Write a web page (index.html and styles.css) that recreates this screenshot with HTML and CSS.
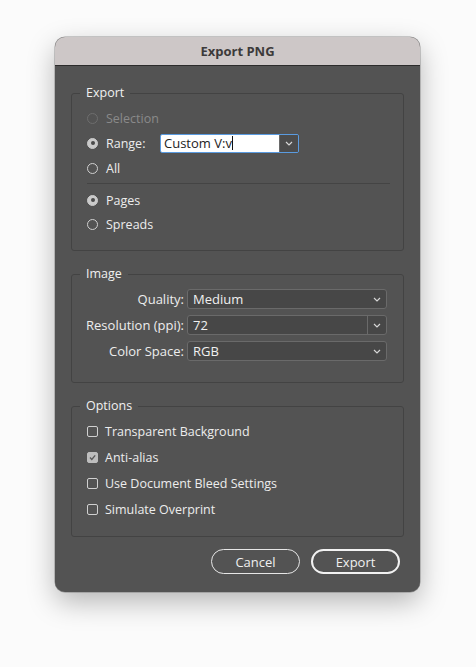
FILE: index.html
```html
<!DOCTYPE html>
<html>
<head>
<meta charset="utf-8">
<link rel="stylesheet" href="styles.css">
</head>
<body>
<div class="dialog">
  <div class="titlebar">Export PNG</div>
  <div class="content">
    <fieldset class="group group-export">
      <legend>Export</legend>
      <div class="inner">
        <div class="row disabled"><span class="radio"></span><span class="lbl">Selection</span></div>
        <div class="row row-range"><span class="radio checked"></span><span class="lbl range-label">Range:</span>
          <div class="combo">
            <span class="combo-text">Custom V:v<span class="caret"></span></span>
            <span class="combo-btn"><svg width="8" height="5" viewBox="0 0 8 5"><path d="M1 1 L4 4 L7 1" fill="none" stroke="#d6d6d6" stroke-width="1.2"/></svg></span>
          </div>
        </div>
        <div class="row"><span class="radio"></span><span class="lbl">All</span></div>
        <div class="sep"></div>
        <div class="row"><span class="radio checked"></span><span class="lbl">Pages</span></div>
        <div class="row"><span class="radio"></span><span class="lbl">Spreads</span></div>
      </div>
    </fieldset>

    <fieldset class="group group-image">
      <legend>Image</legend>
      <div class="form-grid">
        <span class="flabel">Quality:</span>
        <div class="select"><span class="sel-text">Medium</span><span class="sel-arrow"><svg width="8" height="5" viewBox="0 0 8 5"><path d="M1 1 L4 4 L7 1" fill="none" stroke="#d6d6d6" stroke-width="1.2"/></svg></span></div>
        <span class="flabel">Resolution (ppi):</span>
        <div class="select"><span class="sel-text">72</span><span class="sel-arrow split"><svg width="8" height="5" viewBox="0 0 8 5"><path d="M1 1 L4 4 L7 1" fill="none" stroke="#d6d6d6" stroke-width="1.2"/></svg></span></div>
        <span class="flabel">Color Space:</span>
        <div class="select"><span class="sel-text">RGB</span><span class="sel-arrow"><svg width="8" height="5" viewBox="0 0 8 5"><path d="M1 1 L4 4 L7 1" fill="none" stroke="#d6d6d6" stroke-width="1.2"/></svg></span></div>
      </div>
    </fieldset>

    <fieldset class="group group-options">
      <legend>Options</legend>
      <div class="inner">
        <div class="crow"><span class="check"></span><span class="lbl">Transparent Background</span></div>
        <div class="crow"><span class="check checked"><svg width="9" height="9" viewBox="0 0 9 9"><path d="M2 4.6 L3.8 6.4 L7.2 2.4" fill="none" stroke="#5a5a5a" stroke-width="1.4"/></svg></span><span class="lbl">Anti-alias</span></div>
        <div class="crow"><span class="check"></span><span class="lbl">Use Document Bleed Settings</span></div>
        <div class="crow"><span class="check"></span><span class="lbl">Simulate Overprint</span></div>
      </div>
    </fieldset>

    <div class="buttons">
      <button class="btn">Cancel</button>
      <button class="btn primary">Export</button>
    </div>
  </div>
</div>
</body>
</html>
```

FILE: styles.css
```css
html, body {
  margin: 0;
  padding: 0;
  background: #fbfbfb;
}
body {
  font-family: "Open Sans", "Liberation Sans", sans-serif;
  font-size: 12.5px;
  font-weight: 500;
  color: #ededed;
  padding: 37px 0 0 55px;
  height: 667px;
  box-sizing: border-box;
}
.dialog {
  width: 365px;
  height: 555px;
  box-sizing: border-box;
  border-radius: 10px;
  overflow: hidden;
  background: #535353;
  box-shadow: 0 0 0 0.5px rgba(0,0,0,0.35), 0 10px 28px rgba(0,0,0,0.28);
  display: flex;
  flex-direction: column;
}
.titlebar {
  height: 28px;
  line-height: 28px;
  background: #cdc7c7;
  border-bottom: 1px solid #2c2c2c;
  text-align: center;
  font-weight: 700;
  font-size: 13px;
  color: #3c3a3a;
}
.content {
  padding: 0 16px;
  display: flex;
  flex-direction: column;
}
.group {
  margin: 0;
  padding: 0;
  border: 1px solid #434343;
  border-radius: 3px;
  min-width: 0;
}
.group legend {
  margin-left: 8px;
  padding: 0 6px;
  line-height: 16px;
  font-size: 12.5px;
  color: #f0f0f0;
}
.inner {
  padding: 0 13px 0 15px;
}
.group-export {
  margin-top: 19px;
  padding: 5px 0 14px 0;
}
.group-image {
  margin-top: 15px;
  padding: 7px 0 21px 0;
}
.group-options {
  margin-top: 15px;
  padding: 4px 0 14px 0;
}
.row {
  height: 24px;
  display: flex;
  align-items: center;
}
.row-range {
  height: 26px;
}
.lbl {
  margin-left: 8px;
  white-space: nowrap;
}
.disabled .lbl {
  color: #8a8a8a;
}
.radio {
  width: 11px;
  height: 11px;
  box-sizing: border-box;
  border: 1px solid #d0d0d0;
  border-radius: 50%;
  flex: none;
  display: flex;
  align-items: center;
  justify-content: center;
}
.radio.checked {
  background: #cacaca;
  border-color: #cacaca;
}
.radio.checked::after {
  content: "";
  width: 4px;
  height: 4px;
  border-radius: 50%;
  background: #4a4a4a;
}
.disabled .radio {
  border-color: #6e6e6e;
}
.range-label {
  width: 46px;
  margin-right: 8px;
}
.combo {
  width: 139px;
  height: 19px;
  box-sizing: border-box;
  border: 1.5px solid #5a9be0;
  border-radius: 2px;
  display: flex;
  overflow: hidden;
}
.combo-text {
  flex: 1;
  background: #ffffff;
  color: #222;
  font-size: 13px;
  font-weight: 400;
  line-height: 16px;
  padding-left: 3px;
  display: flex;
  align-items: center;
}
.caret {
  width: 1px;
  height: 14px;
  background: #111;
}
.combo-btn {
  width: 18px;
  background: #4c4c4c;
  border-left: 1px solid #6a6a6a;
  display: flex;
  align-items: center;
  justify-content: center;
}
.sep {
  height: 1px;
  background: #444444;
  margin: 3px 0 4px 0;
}
.form-grid {
  display: grid;
  grid-template-columns: 112px 200px;
  column-gap: 3px;
  row-gap: 6px;
  align-items: center;
}
.flabel {
  text-align: right;
  white-space: nowrap;
  font-size: 13px;
}
.select {
  height: 20px;
  box-sizing: border-box;
  border: 1px solid #6a6a6a;
  border-radius: 3px;
  background: #474747;
  display: flex;
  align-items: center;
}
.sel-text {
  flex: 1;
  padding-left: 5px;
  color: #f0f0f0;
  font-size: 13px;
}
.sel-arrow {
  width: 18px;
  height: 100%;
  display: flex;
  align-items: center;
  justify-content: center;
}
.sel-arrow.split {
  border-left: 1px solid #6a6a6a;
}
.crow {
  height: 26px;
  display: flex;
  align-items: center;
}
.crow .lbl {
  margin-left: 7px;
}
.check {
  width: 11px;
  height: 11px;
  box-sizing: border-box;
  border: 1px solid #d0d0d0;
  border-radius: 2px;
  flex: none;
  display: flex;
  align-items: center;
  justify-content: center;
}
.check.checked {
  background: #bdbdbd;
  border-color: #bdbdbd;
}
.buttons {
  margin-top: 12px;
  margin-right: 4px;
  display: flex;
  justify-content: flex-end;
  gap: 11px;
}
.btn {
  width: 89px;
  height: 25px;
  box-sizing: border-box;
  border: 1px solid #e6e6e6;
  border-radius: 13px;
  background: transparent;
  color: #f0f0f0;
  font-family: "Open Sans", "Liberation Sans", sans-serif;
  font-size: 13px;
  font-weight: 500;
  padding: 0;
}
.btn.primary {
  border: 2px solid #f2f2f2;
}
```
